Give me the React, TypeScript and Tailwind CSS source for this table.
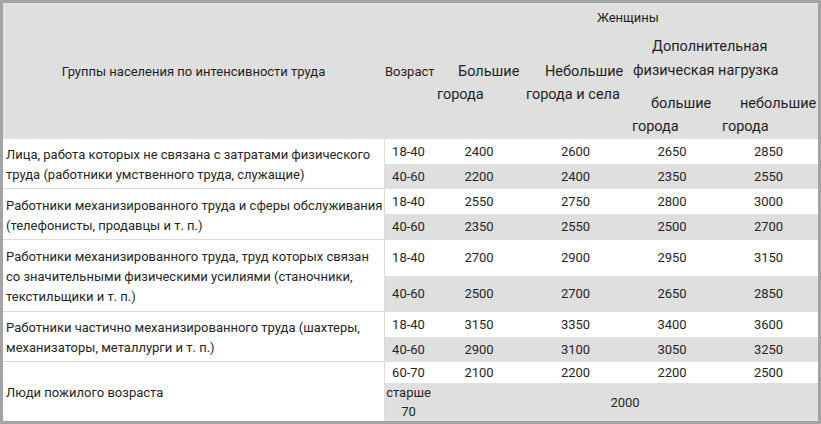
const rows = [
  { age: '18-40', v: ['2400', '2600', '2650', '2850'] },
  { age: '40-60', v: ['2200', '2400', '2350', '2550'] },
  { age: '18-40', v: ['2550', '2750', '2800', '3000'] },
  { age: '40-60', v: ['2350', '2550', '2500', '2700'] },
  { age: '18-40', v: ['2700', '2900', '2950', '3150'] },
  { age: '40-60', v: ['2500', '2700', '2650', '2850'] },
  { age: '18-40', v: ['3150', '3350', '3400', '3600'] },
  { age: '40-60', v: ['2900', '3100', '3050', '3250'] },
  { age: '60-70', v: ['2100', '2200', '2200', '2500'] },
]

const groups: Record<number, { lines: string[]; last?: boolean }> = {
  0: { lines: ['Лица, работа которых не связана с затратами физического', 'труда (работники умственного труда, служащие)'] },
  2: { lines: ['Работники механизированного труда и сферы обслуживания', '(телефонисты, продавцы и т. п.)'] },
  4: {
    lines: [
      'Работники механизированного труда, труд которых связан',
      'со значительными физическими усилиями (станочники,',
      'текстильщики и т. п.)',
    ],
  },
  6: { lines: ['Работники частично механизированного труда (шахтеры,', 'механизаторы, металлурги и т. п.)'] },
  8: { lines: ['Люди пожилого возраста'], last: true },
}

function Lines({ lines }: { lines: string[] }) {
  return (
    <>
      {lines.map((l) => (
        <div key={l} className="whitespace-nowrap">
          {l}
        </div>
      ))}
    </>
  )
}

export default function App() {
  return (
    <div
      className="w-[821px] h-[424px] border-[3px] border-[#a3a3a3] bg-white text-[13px] text-[#262626] overflow-hidden"
      style={{ fontFamily: 'Roboto, "Noto Sans", sans-serif' }}
    >
      {/* header */}
      <div className="grid grid-cols-[377px_52px_89px_107px_89px_101px] grid-rows-[28px_56px_52px] bg-[#dfdfdf] leading-[23px] text-[#1f1f1f]">
        <div className="row-span-3 flex items-center justify-center pl-[4px] pt-[1px]">
          Группы населения по интенсивности труда
        </div>
        <div className="row-span-3 flex items-center pl-[5px]">Возраст</div>
        <div className="col-span-4 flex items-center justify-center pl-[6px]">Женщины</div>
        <div className="row-span-2 flex flex-col justify-center pl-[5px] pb-[4px] text-[14.5px] whitespace-nowrap">
          <div className="indent-[21px]">Большие</div>
          <div>города</div>
        </div>
        <div className="row-span-2 flex flex-col justify-center pl-[5px] pb-[4px] text-[14.5px] whitespace-nowrap">
          <div className="indent-[19px]">Небольшие</div>
          <div>города и села</div>
        </div>
        <div className="col-span-2 flex flex-col justify-center pl-[5px] leading-[24px] text-[14.5px] whitespace-nowrap">
          <div className="indent-[19px]">Дополнительная</div>
          <div>физическая нагрузка</div>
        </div>
        <div className="flex flex-col justify-center pl-[4px] pt-[3px] text-[14.5px] whitespace-nowrap">
          <div className="indent-[19px]">большие</div>
          <div>города</div>
        </div>
        <div className="flex flex-col justify-center pl-[5px] pt-[3px] text-[14.5px] whitespace-nowrap">
          <div className="indent-[18px]">небольшие</div>
          <div>города</div>
        </div>
      </div>

      {/* body */}
      <div className="grid grid-cols-[382px_47px_97px_96px_97px_96px] grid-rows-[25px_25px_25px_26px_36px_36px_25px_25px_21px_38px] leading-[20px]">
        {rows.map((r, i) => {
          const g = groups[i]
          const bg = i % 2 === 0 ? 'bg-white' : 'bg-[#dfdfdf]'
          return [
            g && (
              <div
                key={`g${i}`}
                className={`row-span-2 flex flex-col justify-center pl-[3px] pt-[3px] bg-white border-r border-[#dcdcdc] ${
                  g.last ? '' : 'border-b'
                }`}
              >
                <Lines lines={g.lines} />
              </div>
            ),
            <div key={`a${i}`} className={`${bg} flex items-center justify-center`}>
              {r.age}
            </div>,
            ...r.v.map((v, j) => (
              <div key={`v${i}-${j}`} className={`${bg} flex items-center justify-center pr-[3px]`}>
                {v}
              </div>
            )),
          ]
        })}
        <div className="bg-[#dfdfdf] flex flex-col items-center justify-center leading-[19px]">
          <div>старше</div>
          <div>70</div>
        </div>
        <div className="col-span-4 bg-[#dfdfdf] flex items-center justify-center pt-[1px]">2000</div>
      </div>
    </div>
  )
}
